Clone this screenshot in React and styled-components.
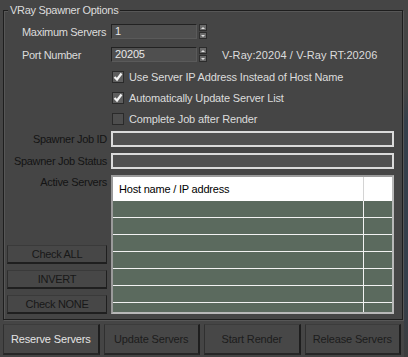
import React from 'react';
import styled, { createGlobalStyle } from 'styled-components';

const Global = createGlobalStyle`
  html, body { margin: 0; padding: 0; background: #454545; }
  body {
    font-family: "Liberation Sans", Arial, sans-serif;
    font-size: 11px;
    letter-spacing: -0.15px;
    color: #dcdcdc;
  }
  * { box-sizing: border-box; }
`;

const Window = styled.div`
  width: 408px;
  height: 357px;
  display: flex;
  overflow: hidden;
  background: #454545;
`;

const Main = styled.div`
  width: 404px;
  display: flex;
  flex-direction: column;
  padding-left: 3px;
`;

const Strip = styled.div`
  width: 4px;
  background: linear-gradient(to bottom, #454545 0 90px, #36404b 120px, #36404b 300px, #3d3d3d 357px);
`;

const Group = styled.div`
  position: relative;
  margin: 10px 1px 0 0;
  height: 310px;
  border: 1px solid #1e1e1e;
  box-shadow: inset 1px 1px 0 #575757, 1px 1px 0 #575757;
  display: flex;
  flex-direction: column;
  padding-right: 8px;
`;

const Title = styled.span`
  position: absolute;
  top: -8px;
  left: 4px;
  padding: 0 2px;
  background: #454545;
  line-height: 14px;
  color: #dcdcdc;
  letter-spacing: -0.3px;
`;

const Row = styled.div`
  display: grid;
  grid-template-columns: 107px 1fr;
  align-items: center;
  height: ${p => p.$h}px;
  margin-top: ${p => p.$mt}px;
`;

const Label = styled.span`
  line-height: 14px;
  white-space: nowrap;
  color: ${p => (p.$disabled ? '#141414' : '#dcdcdc')};
  text-align: ${p => (p.$right ? 'right' : 'left')};
  padding-left: ${p => (p.$right ? 0 : 18)}px;
  padding-right: ${p => (p.$right ? 4 : 0)}px;
  letter-spacing: -0.3px;
`;

const Controls = styled.div`
  display: flex;
  align-items: center;
  height: 100%;
`;

const NumInput = styled.div`
  width: 86px;
  height: 15px;
  background: #4f4f4f;
  border-top: 1px solid #222;
  border-left: 1px solid #222;
  border-bottom: 1px solid #5a5a5a;
  border-right: 1px solid #5a5a5a;
  color: #e8e8e8;
  padding-left: 3px;
  line-height: 13px;
`;

const Spinner = styled.div`
  width: 8px;
  height: 15px;
  margin-left: 2px;
  display: flex;
  flex-direction: column;
  gap: 1px;
`;

const SpinHalf = styled.div`
  flex: 1;
  background: #6a6a6a;
  border: 1px solid #2c2c2c;
  display: flex;
  align-items: center;
  justify-content: center;
  &::after {
    content: '';
    border-left: 2px solid transparent;
    border-right: 2px solid transparent;
    ${p => (p.$down ? 'border-top: 2px solid #e0e0e0;' : 'border-bottom: 2px solid #e0e0e0;')}
  }
`;

const Note = styled.span`
  margin-left: 15px;
  color: #dcdcdc;
  white-space: nowrap;
  letter-spacing: 0.1px;
`;

const CheckBox = styled.span`
  width: 12px;
  height: 12px;
  margin-left: 1px;
  background: ${p => (p.$checked ? '#5e5e5e' : '#4e4e4e')};
  border: 1px solid #2a2a2a;
  display: flex;
  align-items: center;
  justify-content: center;
`;

const CheckText = styled.span`
  margin-left: 5px;
  color: #dcdcdc;
  white-space: nowrap;
`;

const TextBox = styled.div`
  height: 16px;
  width: 283px;
  background: #505050;
  border: 2px solid #dadada;
`;

const ListRow = styled.div`
  display: grid;
  grid-template-columns: 107px 1fr;
  height: 139px;
  margin-top: 6px;
`;

const LeftCol = styled.div`
  display: flex;
  flex-direction: column;
  justify-content: space-between;
`;

const SideButtons = styled.div`
  display: flex;
  flex-direction: column;
  gap: 6px;
  padding: 0 4px 0 3px;
`;

const SideButton = styled.div`
  height: 19px;
  border: 1px solid #2e2e2e;
  border-top-color: #3a3a3a;
  border-bottom: 2px solid #1f1f1f;
  border-right-color: #1f1f1f;
  background: #474747;
  color: #181818;
  display: flex;
  align-items: center;
  justify-content: center;
  line-height: 14px;
  letter-spacing: -0.3px;
`;

const List = styled.div`
  width: 283px;
  height: 139px;
  border: 2px solid #b8b8b8;
  border-left-color: #9a9a9a;
  border-top-color: #9a9a9a;
  overflow: hidden;
  display: flex;
  flex-direction: column;
`;

const ListLine = styled.div`
  display: grid;
  grid-template-columns: 251px 1fr;
  flex: none;
  height: ${p => (p.$header ? 24 : 17)}px;
  background: ${p => (p.$header ? '#ffffff' : '#5b6a5e')};
  border-bottom: ${p => (p.$header ? 'none' : '1px solid #f2f2f2')};
`;

const Cell = styled.div`
  border-right: 1px solid ${p => (p.$header ? '#d4d4d4' : '#f2f2f2')};
  color: #000;
  padding-left: 6px;
  display: flex;
  align-items: center;
  letter-spacing: -0.2px;
`;

const BottomBar = styled.div`
  display: grid;
  grid-template-columns: repeat(4, 1fr);
  gap: 4px;
  height: 31px;
  margin: 4px 3px 0 0;
`;

const BigButton = styled.div`
  border: 1px solid #2a2a2a;
  border-top-color: #3c3c3c;
  border-left-color: #303030;
  border-right: 2px solid #1e1e1e;
  border-bottom: 2px solid #262626;
  background: #474747;
  color: ${p => (p.$active ? '#e4e4e4' : '#1c1c1c')};
  display: flex;
  align-items: center;
  justify-content: center;
  white-space: nowrap;
`;

const Check = () => (
  <svg width="10" height="10" viewBox="0 0 10 10">
    <polyline points="1.5,5 4,7.5 8.5,1.5" fill="none" stroke="#f4f4f4" strokeWidth="2.2" />
  </svg>
);

const CheckRow = ({ checked, children }) => (
  <Row $h={21} $mt={0}>
    <span />
    <Controls>
      <CheckBox $checked={checked}>{checked && <Check />}</CheckBox>
      <CheckText>{children}</CheckText>
    </Controls>
  </Row>
);

const Spin = () => (
  <Spinner>
    <SpinHalf />
    <SpinHalf $down />
  </Spinner>
);

export default function App() {
  const rows = Array.from({ length: 7 });
  return (
    <>
      <Global />
      <Window>
        <Main>
          <Group>
            <Title>VRay Spawner Options</Title>
            <Row $h={15} $mt={13}>
              <Label>Maximum Servers</Label>
              <Controls>
                <NumInput>1</NumInput>
                <Spin />
              </Controls>
            </Row>
            <Row $h={15} $mt={8}>
              <Label>Port Number</Label>
              <Controls>
                <NumInput>20205</NumInput>
                <Spin />
                <Note>V-Ray:20204 / V-Ray RT:20206</Note>
              </Controls>
            </Row>
            <div style={{ marginTop: 4 }}>
              <CheckRow checked>Use Server IP Address Instead of Host Name</CheckRow>
              <CheckRow checked>Automatically Update Server List</CheckRow>
              <CheckRow>Complete Job after Render</CheckRow>
            </div>
            <Row $h={16} $mt={2}>
              <Label $right $disabled>Spawner Job ID</Label>
              <TextBox />
            </Row>
            <Row $h={16} $mt={6}>
              <Label $right $disabled>Spawner Job Status</Label>
              <TextBox />
            </Row>
            <ListRow>
              <LeftCol>
                <Label $right $disabled>Active Servers</Label>
                <SideButtons>
                  <SideButton>Check ALL</SideButton>
                  <SideButton>INVERT</SideButton>
                  <SideButton>Check NONE</SideButton>
                </SideButtons>
              </LeftCol>
              <List>
                <ListLine $header>
                  <Cell $header>Host name / IP address</Cell>
                  <div />
                </ListLine>
                {rows.map((_, i) => (
                  <ListLine key={i}>
                    <Cell />
                    <div />
                  </ListLine>
                ))}
              </List>
            </ListRow>
          </Group>
          <BottomBar>
            <BigButton $active>Reserve Servers</BigButton>
            <BigButton>Update Servers</BigButton>
            <BigButton>Start Render</BigButton>
            <BigButton>Release Servers</BigButton>
          </BottomBar>
        </Main>
        <Strip />
      </Window>
    </>
  );
}
